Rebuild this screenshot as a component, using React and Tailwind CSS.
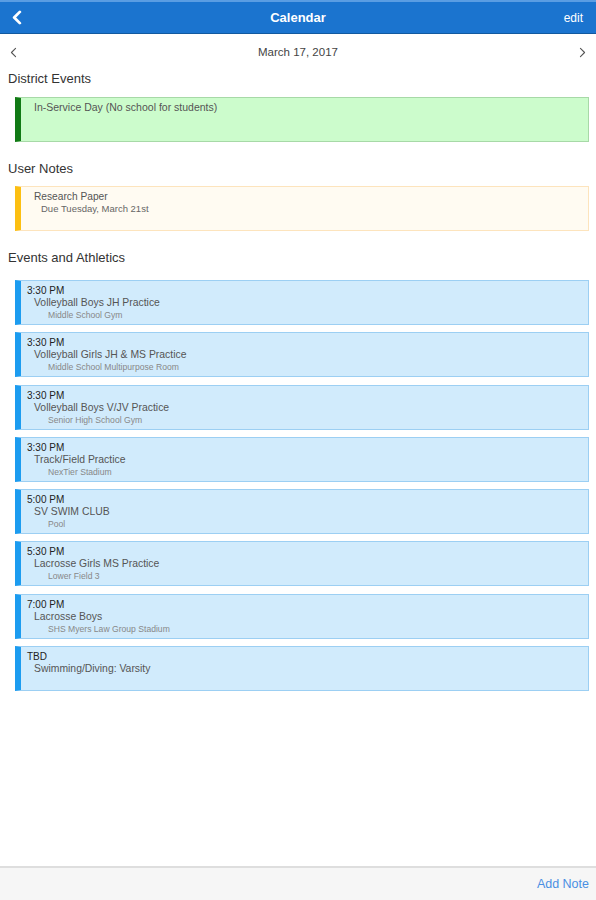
import React from 'react';

const events = [
  { time: '3:30 PM', title: 'Volleyball Boys JH Practice', place: 'Middle School Gym' },
  { time: '3:30 PM', title: 'Volleyball Girls JH & MS Practice', place: 'Middle School Multipurpose Room' },
  { time: '3:30 PM', title: 'Volleyball Boys V/JV Practice', place: 'Senior High School Gym' },
  { time: '3:30 PM', title: 'Track/Field Practice', place: 'NexTier Stadium' },
  { time: '5:00 PM', title: 'SV SWIM CLUB', place: 'Pool' },
  { time: '5:30 PM', title: 'Lacrosse Girls MS Practice', place: 'Lower Field 3' },
  { time: '7:00 PM', title: 'Lacrosse Boys', place: 'SHS Myers Law Group Stadium' },
  { time: 'TBD', title: 'Swimming/Diving: Varsity', place: '' },
];

const Chevron = ({ dir = 'left', className = '', stroke = 2 }) => (
  <svg viewBox="0 0 10 16" className={className} fill="none" stroke="currentColor" strokeWidth={stroke} strokeLinecap="round" strokeLinejoin="round">
    {dir === 'left' ? <path d="M8 2 L2 8 L8 14" /> : <path d="M2 2 L8 8 L2 14" />}
  </svg>
);

const SectionTitle = ({ children, className = '' }) => (
  <div className={`h-[16px] pt-[2px] flex items-center pl-[8px] text-[13px] text-[#333] ${className}`}>{children}</div>
);

const App = () => {
  return (
    <div className="h-[900px] w-[596px] flex flex-col bg-white" style={{ fontFamily: '"Liberation Sans", Arial, sans-serif' }}>
      {/* nav bar */}
      <div className="h-[34px] flex-shrink-0 bg-[#1b74cf] border-t-2 border-t-[#5a9de3] border-b border-b-[#12599f] flex items-center justify-between px-[12px] relative">
        <Chevron className="w-[10px] h-[15px] text-white" stroke={3} />
        <span className="absolute left-0 right-0 text-center text-white font-bold text-[13px] pointer-events-none">Calendar</span>
        <span className="text-white text-[12px] pr-[1px]">edit</span>
      </div>

      <div className="flex-1 flex flex-col">
        {/* date row */}
        <div className="h-[36px] pt-[1px] flex items-center justify-between px-[10px] text-[#555]">
          <Chevron className="w-[7px] h-[11px]" stroke={1.6} />
          <span className="text-[11.5px] text-[#444]">March 17, 2017</span>
          <Chevron dir="right" className="w-[7px] h-[11px]" stroke={1.6} />
        </div>

        <SectionTitle>District Events</SectionTitle>
        <div className="mt-[11px] ml-[15px] mr-[7px] h-[45px] bg-[#ccfccc] border border-[#a7d9a7] border-l-[6px] border-l-[#117a15] pl-[13px] pt-[3px]">
          <div className="text-[10.5px] leading-[12px] text-[#555]">In-Service Day (No school for students)</div>
        </div>

        <SectionTitle className="mt-[18px]">User Notes</SectionTitle>
        <div className="mt-[10px] ml-[15px] mr-[7px] h-[45px] bg-[#fffbf2] border border-[#fde4bd] border-l-[6px] border-l-[#fcbf12] pl-[13px] pt-[4px]">
          <div className="text-[10.2px] leading-[12px] text-[#555]">Research Paper</div>
          <div className="text-[9.5px] leading-[12px] text-[#666] pl-[7px]">Due Tuesday, March 21st</div>
        </div>

        <SectionTitle className="mt-[18px]">Events and Athletics</SectionTitle>
        <div className="mt-[15px] ml-[15px] mr-[7px] flex flex-col gap-[7.3px]">
          {events.map((e, i) => (
            <div key={i} className="h-[45px] bg-[#d1ebfc] border border-[#9ccff3] border-l-[6px] border-l-[#1c9cf0] pl-[6px] pt-[4px]">
              <div className="text-[10px] leading-[12px] text-[#222]">{e.time}</div>
              <div className="text-[10.4px] leading-[12px] text-[#555] pl-[7px]">{e.title}</div>
              {e.place && <div className="text-[8.6px] leading-[12px] text-[#888] pl-[21px]">{e.place}</div>}
            </div>
          ))}
        </div>
      </div>

      {/* bottom bar */}
      <div className="h-[34px] flex-shrink-0 bg-[#f6f6f6] border-t-2 border-t-[#dedede] flex items-center justify-end pr-[7px]">
        <span className="text-[12.5px] text-[#4a8fe3]">Add Note</span>
      </div>
    </div>
  );
};

export default App;
